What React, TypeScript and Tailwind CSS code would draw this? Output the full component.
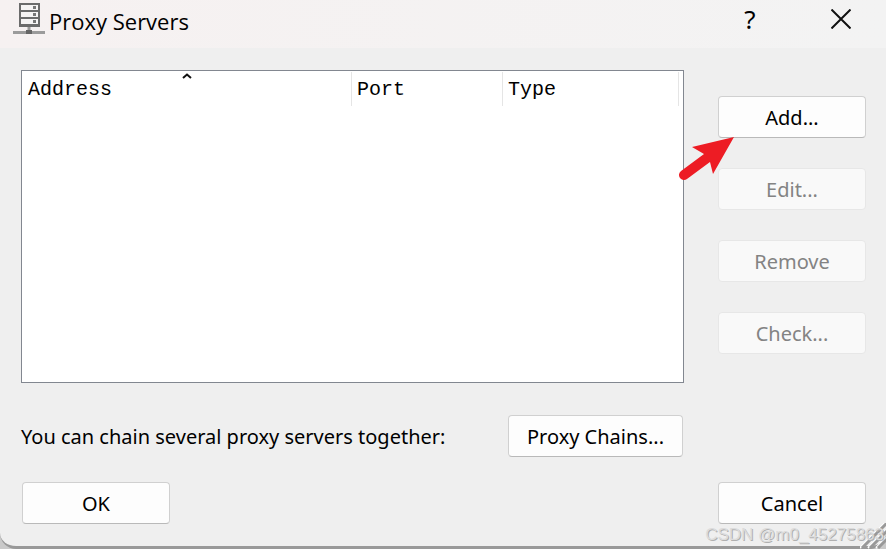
import type { ReactNode } from "react";

const uiFont = "font-['Tahoma','Noto_Sans',sans-serif]";

type DialogButtonProps = { children: ReactNode; width?: string; disabled?: boolean };

function DialogButton({ children, width = "w-[148px]", disabled = false }: DialogButtonProps) {
  return (
    <button
      type="button"
      disabled={disabled}
      className={`${width} h-[42px] shrink-0 rounded border border-[#d0d0d0] border-b-[#b9b9b9] bg-[#fdfdfd] pt-0.5 text-xl leading-7 whitespace-nowrap text-black disabled:border-[#e7e7e7] disabled:bg-[#f9f9f9] disabled:text-[#838383]`}
    >
      {children}
    </button>
  );
}

function ServerIcon() {
  return (
    <svg viewBox="0 0 32 32" className="h-8 w-8 shrink-0" aria-hidden="true">
      <rect x="6" y="0" width="21" height="24" fill="#6b6b6b" />
      <rect x="8" y="2" width="17" height="5" fill="#f6f4f4" />
      <rect x="8" y="9" width="17" height="5" fill="#f6f4f4" />
      <rect x="8" y="16" width="17" height="5" fill="#f6f4f4" />
      <path d="M20 4.5h3M20 11.5h3M20 18.5h3" stroke="#777" strokeWidth="3" />
      <path d="M16 24v4" stroke="#999" strokeWidth="3" />
      <path d="M0 29.5h32" stroke="#9b9b9b" strokeWidth="3" />
      <rect x="13" y="27" width="6" height="4" fill="#666" />
    </svg>
  );
}

function PointerArrow() {
  return (
    <svg
      viewBox="0 0 58 46"
      className="pointer-events-none absolute top-10 -left-10 h-[46px] w-[58px]"
      aria-hidden="true"
    >
      <path d="M6 39L29 22" stroke="#ed1c24" strokeWidth="10" strokeLinecap="round" />
      <path d="M56 1L14 11L26 18L32 26L35 38Z" fill="#ed1c24" />
    </svg>
  );
}

export default function App() {
  return (
    <div className={`${uiFont} relative bg-[#c9c9c9] text-black`}>
      <main className="overflow-hidden rounded-b-2xl border-b-[3px] border-[#999] bg-[#efefef]">
        <header className="flex h-12 items-start bg-linear-to-r from-[#f6f1f1] to-[#f3f3f3] pt-[3px] pr-[33px] pl-[13px]">
          <ServerIcon />
          <h1 className="ml-1 flex-1 font-['Segoe_UI','Open_Sans',sans-serif] text-[22px] leading-9">
            Proxy Servers
          </h1>
          <button type="button" aria-label="Help" className="mr-[69px] w-5 font-['Segoe_UI','Noto_Sans',sans-serif] text-[26px] leading-8">
            ?
          </button>
          <button type="button" aria-label="Close" className="mt-1 flex h-6 w-6 items-center justify-center">
            <svg viewBox="0 0 20 20" className="h-5 w-5" aria-hidden="true">
              <path d="M0.5 0.5L19.5 19.5M19.5 0.5L0.5 19.5" stroke="#111" strokeWidth="2" />
            </svg>
          </button>
        </header>

        <div className="pt-[22px] pr-5 pb-[22px] pl-[21px]">
          <div className="flex gap-[34px]">
            <div className="h-[313px] flex-1 border border-[#828790] bg-white pt-px pr-1">
              <table className="w-full table-fixed border-separate border-spacing-0 text-left font-['Liberation_Mono',monospace] text-xl leading-8">
                <thead>
                  <tr>
                    <th scope="col" className="relative h-[34px] border-r border-[#e5e5e5] p-0 pt-0.5 pl-1.5 font-normal">
                      <svg viewBox="0 0 10 6" className="absolute top-px left-1/2 h-1.5 w-2.5 -translate-x-1/2" aria-hidden="true">
                        <path d="M1 5L5 1.5L9 5" fill="none" stroke="#111" strokeWidth="2" />
                      </svg>
                      Address
                    </th>
                    <th scope="col" className="w-[151px] border-r border-[#e5e5e5] p-0 pt-0.5 pl-[5px] font-normal">Port</th>
                    <th scope="col" className="w-[176px] border-r border-[#e5e5e5] p-0 pt-0.5 pl-[5px] font-normal">Type</th>
                  </tr>
                </thead>
              </table>
            </div>
            <div className="flex flex-col gap-[30px] pt-[26px]">
              <div className="relative flex">
                <DialogButton>Add...</DialogButton>
                <PointerArrow />
              </div>
              <DialogButton disabled>Edit...</DialogButton>
              <DialogButton disabled>Remove</DialogButton>
              <DialogButton disabled>Check...</DialogButton>
            </div>
          </div>

          <div className="mt-8 flex items-center justify-between pr-[183px]">
            <p className="pt-0.5 text-xl leading-7 whitespace-nowrap">You can chain several proxy servers together:</p>
            <DialogButton width="w-[175px]">Proxy Chains...</DialogButton>
          </div>

          <div className="mt-[25px] flex justify-between pl-px">
            <DialogButton>OK</DialogButton>
            <DialogButton>Cancel</DialogButton>
          </div>
        </div>
      </main>

      <svg viewBox="0 0 26 26" className="absolute right-0 bottom-0 h-[26px] w-[26px]" aria-hidden="true">
        <path d="M0 25L26 -1M8 25L26 7M16 25L26 15" stroke="#fff" strokeWidth="2" />
        <path d="M2 25L27 0M10 25L27 8M18 25L27 16" stroke="#999" strokeWidth="3" />
      </svg>
      <span className="absolute right-0.5 bottom-0.5 font-['Liberation_Sans',sans-serif] text-[17px] leading-6 whitespace-nowrap text-[#dcdcdc] [text-shadow:1px_1px_0_#b0b0b0]">
        CSDN @m0_45275863
      </span>
    </div>
  );
}
